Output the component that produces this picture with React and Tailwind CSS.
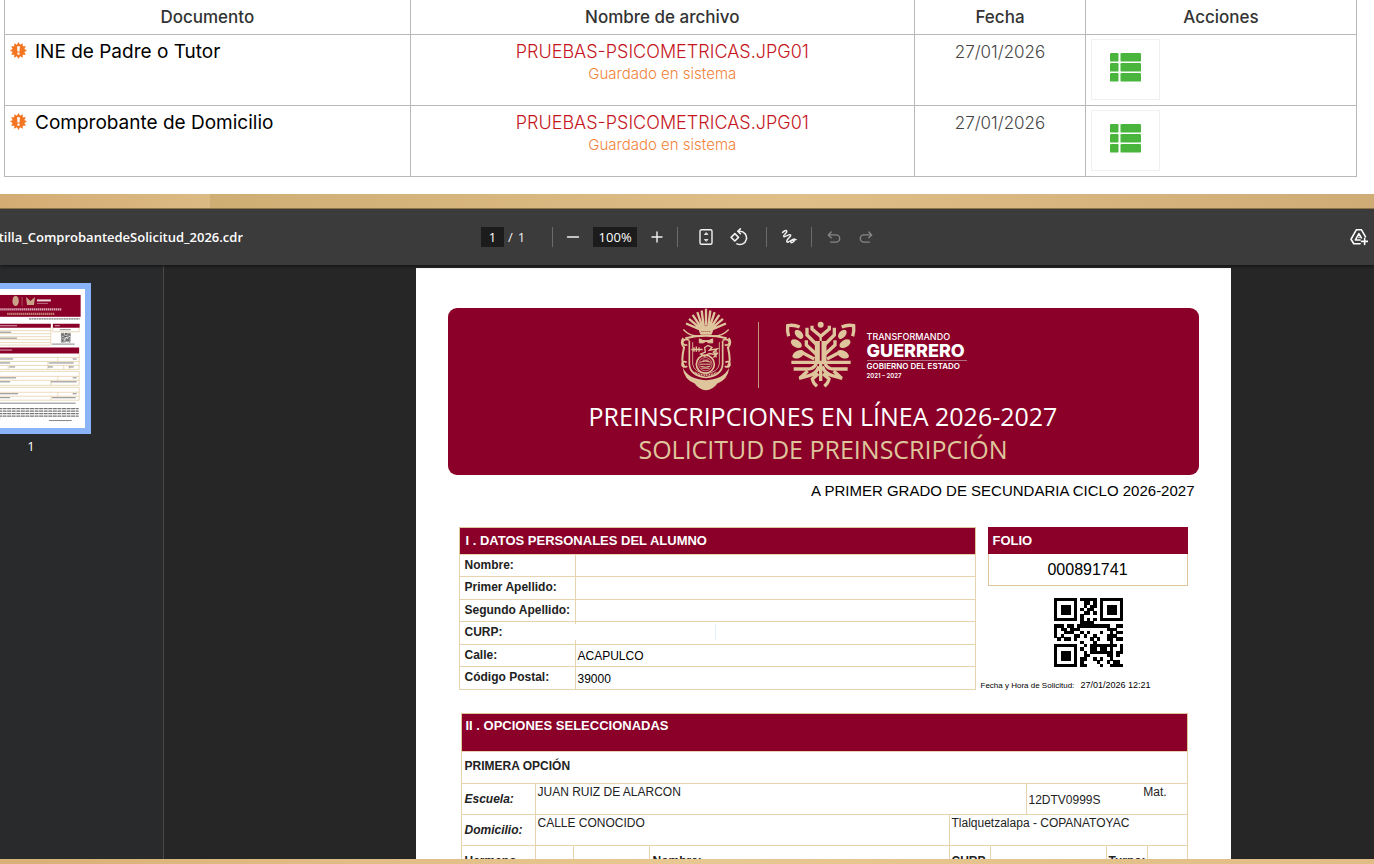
import React from 'react';

const documents = [
  { id: 1, name: 'INE de Padre o Tutor', file: 'PRUEBAS-PSICOMETRICAS.JPG01', date: '27/01/2026' },
  { id: 2, name: 'Comprobante de Domicilio', file: 'PRUEBAS-PSICOMETRICAS.JPG01', date: '27/01/2026' },
];

const student = [
  { label: 'Nombre:', value: '' },
  { label: 'Primer Apellido:', value: '' },
  { label: 'Segundo Apellido:', value: '' },
  { label: 'CURP:', value: '', hidden: true },
  { label: 'Calle:', value: 'ACAPULCO' },
  { label: 'Código Postal:', value: '39000' },
];

const qrRows = [
  '111111101111101111111',
  '100000100110101000001',
  '101110100101101011101',
  '101110101011001011101',
  '101110100110101011101',
  '100000101000001000001',
  '111111101010101111111',
  '000000001111000000000',
  '111011011111111110011',
  '101101110000000011100',
  '100111001010001001011',
  '101000110100100011100',
  '010110100001010011011',
  '000000001000100001000',
  '111111100101111111101',
  '100000101001101101001',
  '101110100101111111011',
  '101110100110000011010',
  '101110101100101001000',
  '100000101000010010110',
  '111111101100001001111',
];

const burst = Array.from({ length: 24 }, (_, i) => {
  const r = i % 2 ? 6.4 : 9;
  const a = (i * Math.PI) / 12;
  return `${(9 + r * Math.sin(a)).toFixed(1)},${(9 - r * Math.cos(a)).toFixed(1)}`;
}).join(' ');

const AlertIcon = () => (
  <svg viewBox="0 0 18 18" className="w-[17px] h-[17px] shrink-0">
    <polygon points={burst} fill="#f47521" />
    <path d="M7.5 4.4h3l-.4 5.6H7.900zM7.900 11.2h2.200v2.200H7.900z" fill="#fff" />
  </svg>
);

const ListIcon = () => (
  <svg viewBox="0 0 31 29" className="w-[31px] h-[29px]" fill="#49b53c">
    {[0, 10, 20].map((y) => (
      <g key={y}>
        <rect x="0" y={y} width="8.5" height="8.6" rx="1.2" />
        <rect x="10.5" y={y} width="20.5" height="8.6" rx="1.2" />
      </g>
    ))}
  </svg>
);

const Icon = ({ children, className = 'w-4 h-4' }) => (
  <svg
    viewBox="0 0 16 16"
    className={className}
    fill="none"
    stroke="currentColor"
    strokeWidth="1.4"
    strokeLinecap="round"
    strokeLinejoin="round"
  >
    {children}
  </svg>
);

const Separator = ({ className }) => <span className={`w-px h-5 bg-[#6b6b6b] ${className}`} />;

const Toolbar = () => (
  <div className="h-14 shrink-0 flex items-center bg-[#3b3b3b] text-white font-['Open_Sans','Noto_Sans',sans-serif] text-[13px] leading-5 shadow-[0_1px_3px_#111] relative">
    <div className="w-[35%] shrink-0">
      <div className="w-[243px] flex justify-end overflow-hidden font-semibold whitespace-nowrap">
        tilla_ComprobantedeSolicitud_2026.cdr
      </div>
    </div>
    <div className="flex items-center text-[#f1f1f1] shrink-0">
      <input
        aria-label="Página"
        defaultValue="1"
        className="w-[23px] h-5 bg-[#1c1c1c] text-center text-white outline-none"
      />
      <span className="ml-1">/</span>
      <span className="ml-[5px]">1</span>
      <Separator className="ml-[27px]" />
      <button aria-label="Alejar" className="ml-3">
        <Icon><path d="M2.5 8h11" /></Icon>
      </button>
      <input
        aria-label="Zoom"
        defaultValue="100%"
        className="ml-3 w-11 h-5 bg-[#1c1c1c] text-center text-white outline-none"
      />
      <button aria-label="Acercar" className="ml-3">
        <Icon><path d="M3 8h10M8 3v10" /></Icon>
      </button>
      <Separator className="ml-3" />
      <button aria-label="Ajustar a la página" className="ml-5">
        <Icon className="w-4 h-[18px]">
          <rect x="2" y="0.8" width="12" height="14.4" rx="1.5" />
          <path d="M8 3.8 6.4 5.5h3.2zM8 12.2l-1.6-1.7h3.2z" fill="currentColor" strokeWidth="0.8" />
        </Icon>
      </button>
      <button aria-label="Girar" className="ml-4">
        <Icon className="w-[18px] h-[18px]">
          <path d="M4.3 5 7.6 8.3 4.3 11.6 1 8.3z" />
          <path d="M7.2 2.9h1.6a5.9 5.9 0 1 1-2.6 11.2" />
          <path d="M9.2.8 7 2.9l2.2 2.2" />
        </Icon>
      </button>
      <Separator className="ml-[18px]" />
      <button aria-label="Dibujar" className="ml-3.5">
        <Icon>
          <path d="M1.5 3.6C3 2 5.2.8 5.800 2c.8 1.800-3.600 3.800-3.200 5.300C3.200 9 8.600 4.600 9.600 6c1 1.600-4.400 4-3.800 6.600.6 2.600 6.600-4.200 7.800-2.600 1 1.400-3 4.800-3.800 3.400-.6-1.400 2.400-2.800 5.400-2.800" />
        </Icon>
      </button>
      <Separator className="ml-3.5" />
      <button aria-label="Deshacer" disabled className="ml-3.5 text-[#858585]">
        <Icon>
          <path d="M5.2 3 2.3 5.9l2.9 2.9M2.5 5.9h7.6a3.6 3.6 0 0 1 0 7.2H4.6" />
        </Icon>
      </button>
      <button aria-label="Rehacer" disabled className="ml-4 text-[#858585]">
        <Icon>
          <path d="M10.8 3l2.9 2.9-2.9 2.9M13.5 5.9H5.9a3.6 3.6 0 0 0 0 7.2h5.5" />
        </Icon>
      </button>
    </div>
    <button aria-label="Guardar en Drive" className="ml-auto mr-1.5">
      <Icon className="w-[18px] h-[18px]">
        <path d="M9 14H3.4L.9 10 5.6 1.6h4.6l3.6 6.2" />
        <path d="M9 10.6H4.8L7.9 5l2.2 3.8M8 8.4v.1M13 9.2v5.4M10.3 11.9h5.4" />
      </Icon>
    </button>
  </div>
);

const QrCells = () =>
  qrRows.map((row, y) =>
    row.split('').map((c, x) => c === '1' && <rect key={`${x}-${y}`} x={x} y={y} width="1.03" height="1.03" />)
  );

const Thumbnail = () => (
  <svg viewBox="0 0 108 140" className="w-[108px] h-[139px] bg-white">
    <rect x="4" y="6" width="100" height="22" fill="#8a0029" />
    <ellipse cx="38.5" cy="12" rx="3.2" ry="5.2" fill="#c9a488" />
    <path d="M45 8v9" stroke="#c9a488" strokeWidth=".5" />
    <path d="M49 8l4.5 4L58 8l-1 8h-7z" fill="#c9a488" />
    <path d="M60 11.5h14" stroke="#ecd7dd" strokeWidth="2" />
    <path d="M60 14.5h11" stroke="#c78a9c" strokeWidth=".8" />
    <path d="M23 20.5h62" stroke="#d9a9b7" strokeWidth="2.4" strokeDasharray="1.5 .5" />
    <path d="M30 25h48" stroke="#bf8070" strokeWidth="2.2" strokeDasharray="1.5 .5" />
    <path d="M52 30h51" stroke="#777" strokeWidth="1.2" strokeDasharray="2 .5" />
    <path d="M5.5 35H74v4H5.5zM76 35h27v4H76zM6 59h96.5v6H6z" fill="#8a0029" />
    <path d="M8 37h32M78 37h5M8 61.5h27" stroke="#d4a4b2" strokeWidth="1" />
    <path
      d="M6 39v17.5h68V39M6 42h68M6 45h68M6 48h68M6 51h68M6 54h68M21 39v17M76 39v4h26.500v-4M6 65v16h96.500V65M6 69h96.500M6 73h96.500M6 77h96.500M15.500 69v12M81 69v4M71 73v8M31 77v4M87 77v4M93 77v4M6 83h96.500v14H6zM6 88h96.500M6 92h96.500M81 88v4M74 92v5M6 99h96.500v13H6zM6 104h96.500M6 108h96.500M81 104v4M74 108v4"
      fill="none"
      stroke="#e6d0ab"
      strokeWidth=".8"
    />
    <path
      d="M7 40.500h10M7 43.500h27M7 46.500h12M22 49.500h18M7 52.500h15M83 41h11M16 70.500h20M96 70.500h4M16 74.500h17M72 74.500h25M32 78.500h6M71 78.500h5M92 78.500h5M16 89.500h23M96 89.500h4M16 93.500h17M74 93.500h26M16 105.500h25M96 105.500h4M16 109.500h17M75 109.500h24M7 115h92M72 132.500h23M75 55.500h23"
      stroke="#777"
      strokeWidth=".9"
    />
    <path d="M7 120.500h95M7 123h95M7 125.500h95M7 128h95M7 130.500h16" stroke="#777" strokeWidth="1.1" strokeDasharray="4 .6" />
    <svg x="84" y="44" width="10" height="10" viewBox="0 0 21 21"><QrCells /></svg>
  </svg>
);

const Crest = () => (
  <svg viewBox="60 22 156 248" className="w-[52px] h-[83px]" fill="none" stroke="#dfc59b" strokeWidth="3">
    {/* feathers */}
    <path
      d="M138 24v50M125 29l6 48M151 29l-6 48M112 34l15 45M164 34l-15 45M98 42l25 38M178 42l-25 38M87 54l33 28M189 54l-33 28M78 68l40 17M198 68l-40 17"
      strokeWidth="7"
    />
    <path d="M116 82q22-12 44 0l-6 18h-32z" fill="#dfc59b" />
    <path d="M124 92h28" stroke="#8a0029" strokeWidth="2" strokeDasharray="3 3" />
    <path d="M70 86q20 22 50 20M206 86q-20 22-50 20" strokeWidth="4" />
    {/* shield */}
    <path d="M76 112q62-14 124 0M70 112q-10 14 2 28-5 22-5 36 0 14 6 22M206 112q10 14-2 28 5 22 5 36 0 14-6 22" strokeWidth="6" />
    <path d="M88 118q-16-6-20 6 2 12 14 8M188 118q16-6 20 6-2 12-14 8M80 184q-14-6-14 8 4 10 16 4M196 184q14-6 14 8-4 10-16 4" strokeWidth="5" />
    <path d="M88 120v70q2 34 50 40 48-6 50-40v-70" strokeWidth="5" />
    <path d="M98 124v66q4 24 40 29 36-5 40-29v-66" strokeWidth="2.5" />
    <path d="M68 200q4 36 36 48 14 20 34 20t34-20q32-12 36-48-18 36-70 38-52-2-70-38z" fill="#dfc59b" stroke="none" />
    <path d="M118 114q20 12 40 0v12h-12l-8-5-8 5h-12z" fill="#dfc59b" />
    <path d="M94 146h34M102 139v14M109 137v16M117 139v14M134 140l10-6 12 6-8 8 24-4-12 10 10 8-22-4-14 8-12-6 14-6zM168 144v26M174 156l-14 14" strokeWidth="4" />
    <circle cx="136" cy="190" r="27" strokeWidth="5" />
    <circle cx="136" cy="190" r="20" strokeWidth="2" />
    <path d="M119 184q17-6 34 0M119 190h34M121 196q15 6 30 0M124 202h24M128 178h18" strokeWidth="3" />
    <path d="M104 214q34 18 68 0" strokeWidth="5" strokeDasharray="3 2" />
  </svg>
);

const TreeLogo = () => (
  <svg viewBox="324 44 216 202" className="w-[72px] h-[68px]" fill="none" stroke="#dfc59b" strokeWidth="10">
    <path d="M335 92q-5-16-3-32 18-4 36 4M527 92q5-16 3-32-18-4-36 4" />
    <circle cx="431" cy="57" r="9" fill="#dfc59b" stroke="none" />
    <path d="M405 60v10l26 22 26-22V60" />
    <path d="M431 94v12" strokeWidth="7" />
    {/* branches and trunk */}
    <path d="M390 66v22l30 30M472 66v22l-30 30" />
    <path d="M388 104v14l30 28M474 104v14l-30 28M378 142l34 18M484 142l-34 18" />
    <path d="M421 106v66M441 106v66" strokeWidth="15" />
    <g fill="#dfc59b" stroke="none">
      <ellipse cx="366" cy="86" rx="10" ry="16" transform="rotate(-42 366 86)" />
      <ellipse cx="358" cy="114" rx="11" ry="18" transform="rotate(-60 358 114)" />
      <ellipse cx="364" cy="146" rx="11" ry="19" transform="rotate(-115 364 146)" />
      <ellipse cx="496" cy="86" rx="10" ry="16" transform="rotate(42 496 86)" />
      <ellipse cx="504" cy="114" rx="11" ry="18" transform="rotate(60 504 114)" />
      <ellipse cx="498" cy="146" rx="11" ry="19" transform="rotate(115 498 146)" />
    </g>
    {/* roots */}
    <path d="M343 170h178" />
    <path d="M418 174q-8 16-26 16h-42M444 174q8 16 26 16h42M431 172v54" />
    <path d="M426 182q-8 22-30 28l-30 8M436 182q8 22 30 28l30 8M392 196l-24 22M470 196l24 22M424 204l-18 16q2 12 14 22M438 204l18 16q-2 12-14 22" />
  </svg>
);

const Banner = () => (
  <header className="h-[167px] rounded-[9px] bg-[#8a0029] flex flex-col items-center">
    <div className="h-[91px] flex items-start">
      <Crest />
      <span className="ml-[26px] mt-3.5 w-px h-[66px] bg-[#c39a79]" />
      <div className="ml-[26px] mt-3"><TreeLogo /></div>
      <div className="ml-2.5 mt-6 w-[100px] text-white font-['Inter',sans-serif] font-semibold whitespace-nowrap">
        <p className="text-[9px] leading-[10px] font-medium">TRANSFORMANDO</p>
        <p className="text-[18px] leading-[18px] font-extrabold">GUERRERO</p>
        <div className="h-px bg-[#b46a80]" />
        <p className="text-[8px] leading-[11px]">GOBIERNO DEL ESTADO</p>
        <p className="text-[6px] leading-2">2021 – 2027</p>
      </div>
    </div>
    <h1 className="font-['Open_Sans','Noto_Sans',sans-serif] text-[25px] leading-[34px] text-white whitespace-nowrap">
      PREINSCRIPCIONES EN LÍNEA 2026-2027
    </h1>
    <h2 className="font-['Open_Sans','Noto_Sans',sans-serif] text-[25px] leading-8 text-[#dfc59b] whitespace-nowrap">
      SOLICITUD DE PREINSCRIPCIÓN
    </h2>
  </header>
);

const StudentTable = () => (
  <table className="w-[517px] border-collapse table-fixed border border-[#dfc59b]">
    <colgroup>
      <col className="w-[116px]" />
      <col />
    </colgroup>
    <thead>
      <tr className="h-[27px] bg-[#8a0029] text-white">
        <th colSpan={2} className="px-1.5 text-left text-[13px] leading-4 font-bold">I . DATOS PERSONALES DEL ALUMNO</th>
      </tr>
    </thead>
    <tbody>
      {student.map((row) => (
        <tr key={row.label} className="h-[22px] even:h-[23px]">
          <th className="border border-[#e8d3af] p-0 pl-[5px] text-left align-top text-xs leading-5 font-bold text-[#222] whitespace-nowrap">
            {row.label}
          </th>
          <td className="relative border border-[#e8d3af] p-0 pl-0.5 align-bottom text-xs leading-5">
            {row.value}
            {row.hidden && <span className="absolute -left-0.5 top-0.5 w-[142px] h-4 border-r border-[#dff3f5] bg-white" />}
          </td>
        </tr>
      ))}
    </tbody>
  </table>
);

const OptionsTable = () => (
  <table className="mt-[21px] ml-[13px] w-[726px] border-collapse table-fixed border border-[#dfc59b] text-xs leading-4">
    <colgroup>
      <col className="w-[74px]" />
      <col className="w-[38px]" />
      <col className="w-[76px]" />
      <col className="w-[300px]" />
      <col className="w-[41px]" />
      <col className="w-[36px]" />
      <col className="w-[80px]" />
      <col className="w-[41px]" />
      <col className="w-[40px]" />
    </colgroup>
    <thead>
      <tr className="h-[38px] bg-[#8a0029] text-white">
        <th colSpan={9} className="px-1 pt-0.5 text-left align-top text-[13px] leading-5 font-bold">II . OPCIONES SELECCIONADAS</th>
      </tr>
    </thead>
    <tbody className="text-[#222]">
      <tr className="h-8">
        <th colSpan={9} className="border border-[#e8d3af] px-[3px] pb-0.5 text-left">PRIMERA OPCIÓN</th>
      </tr>
      <tr className="h-[31px]">
        <th className="border border-[#e8d3af] px-[3px] text-left italic">Escuela:</th>
        <td colSpan={5} className="border border-[#e8d3af] px-0.5 align-top">JUAN RUIZ DE ALARCON</td>
        <td colSpan={3} className="border border-[#e8d3af] px-0.5 align-top">
          <div className="flex justify-between items-start">
            <span className="pt-2">12DTV0999S</span>
            <span className="pr-[18px]">Mat.</span>
          </div>
        </td>
      </tr>
      <tr className="h-[31px]">
        <th className="border border-[#e8d3af] px-[3px] text-left italic">Domicilio:</th>
        <td colSpan={3} className="border border-[#e8d3af] px-0.5 align-top">CALLE CONOCIDO</td>
        <td colSpan={5} className="border border-[#e8d3af] px-0.5 align-top">Tlalquetzalapa - COPANATOYAC</td>
      </tr>
      <tr className="h-[31px]">
        <th className="border border-[#e8d3af] px-[3px] text-left">Hermano</th>
        <td className="border border-[#e8d3af]" />
        <td className="border border-[#e8d3af]" />
        <th className="border border-[#e8d3af] px-[3px] text-left">Nombre:</th>
        <th className="border border-[#e8d3af] px-0.5 text-left">CURP</th>
        <td colSpan={2} className="border border-[#e8d3af]" />
        <th className="border border-[#e8d3af] px-0.5 text-left">Turno:</th>
        <td className="border border-[#e8d3af]" />
      </tr>
    </tbody>
  </table>
);

const PdfPage = () => (
  <article className="w-[815px] h-[1055px] shrink-0 bg-white px-8 pt-10 font-['Liberation_Sans',Arial,sans-serif] text-black">
    <Banner />
    <p className="mt-1.5 pr-1 text-right text-[15px] leading-5">A PRIMER GRADO DE SECUNDARIA CICLO 2026-2027</p>
    <div className="mt-[26px] ml-[11px] flex items-start">
      <StudentTable />
      <div className="ml-1 w-[212px]">
        <div className="ml-2 w-[200px] border border-t-0 border-[#dfc59b]">
          <h3 className="-mx-px h-[27px] bg-[#8a0029] px-[5px] text-[13px] leading-[27px] font-bold text-white">FOLIO</h3>
          <p className="h-[31px] text-center text-base leading-[31px]">000891741</p>
        </div>
        <svg viewBox="0 0 21 21" className="mt-3 ml-[74px] w-[69px] h-[69px]" shapeRendering="crispEdges">
          <QrCells />
        </svg>
        <p className="mt-3 ml-px text-[8px] leading-3 whitespace-nowrap">
          Fecha y Hora de Solicitud: <span className="ml-1 text-[9px]">27/01/2026 12:21</span>
        </p>
      </div>
    </div>
    <OptionsTable />
  </article>
);

const PdfViewer = () => (
  <section className="flex-1 min-h-0 flex flex-col overflow-hidden bg-[#262626]">
    <Toolbar />
    <div className="flex-1 min-h-0 flex">
      <aside className="w-[164px] shrink-0 border-r border-[#4a4a4a] bg-[#292a2c] pt-[18px]">
        <div className="-ml-[29px] w-[120px]">
          <button aria-label="Página 1" className="block border-[6px] border-[#8ab4f8]">
            <Thumbnail />
          </button>
          <p className="mt-0.5 text-center text-[13px] leading-5 text-white font-['Open_Sans','Noto_Sans',sans-serif]">1</p>
        </div>
      </aside>
      <div className="flex-1 min-w-0 flex justify-center pt-[3px] pl-[108px] overflow-hidden">
        <PdfPage />
      </div>
    </div>
  </section>
);

const DocumentsTable = () => (
  <table className="w-full table-fixed border-collapse border border-t-0 border-[#b9b9b9]">
    <thead>
      <tr className="h-[34px] text-[#333]">
        <th className="w-[30%] border-x border-[#b9b9b9] pt-0.5 font-medium">Documento</th>
        <th className="border-x border-[#b9b9b9] pt-0.5 font-medium">Nombre de archivo</th>
        <th className="w-[171px] border-x border-[#b9b9b9] pt-0.5 font-medium">Fecha</th>
        <th className="w-[271px] border-x border-[#b9b9b9] pt-0.5 font-medium">Acciones</th>
      </tr>
    </thead>
    <tbody>
      {documents.map((doc) => (
        <tr key={doc.id} className="h-[71px]">
          <td className="border border-[#b9b9b9] align-top px-[5px] pt-[5px] pb-0">
            <div className="flex items-start">
              <div className="pt-0.5"><AlertIcon /></div>
              <span className="ml-2 text-black text-[19px] leading-6 font-normal">{doc.name}</span>
            </div>
          </td>
          <td className="border border-[#b9b9b9] align-top pt-[5px] pb-0 text-center">
            <p className="text-lg leading-6 text-[#c4161c]">{doc.file}</p>
            <p className="text-[15px] leading-5 text-[#f0833a]">Guardado en sistema</p>
          </td>
          <td className="border border-[#b9b9b9] align-top pt-[5px] pb-0 text-center leading-6 text-[#444]">{doc.date}</td>
          <td className="border border-[#b9b9b9] align-top px-[5px] py-1">
            <button
              aria-label="Ver opciones"
              className="w-[69px] h-[61px] border border-[#f0f0f0] pb-1 flex items-center justify-center"
            >
              <ListIcon />
            </button>
          </td>
        </tr>
      ))}
    </tbody>
  </table>
);

const App = () => (
  <div className="h-screen flex flex-col overflow-hidden bg-[#e3c08a]">
    <main className="shrink-0 bg-white pl-1 pr-[17px] pb-[17px] font-['Inter',sans-serif] text-[17px] font-light">
      <DocumentsTable />
    </main>
    {/* wood strip */}
    <div className="h-[15px] shrink-0 flex border-b border-[#8d7347]">
      <div className="w-[210px] bg-linear-to-r from-[#d3ac73] to-[#dcba83]" />
      <div className="flex-1 bg-linear-to-r from-[#cfae74] via-[#e0be88] to-[#cfab75]" />
    </div>
    <PdfViewer />
    <div className="h-[5px] shrink-0 bg-linear-to-r from-[#d9b076] via-[#e8c892] to-[#e0bd85]" />
  </div>
);

export default App;
